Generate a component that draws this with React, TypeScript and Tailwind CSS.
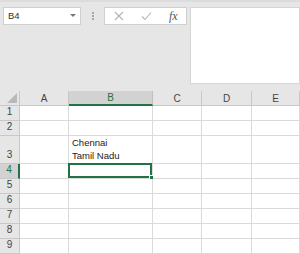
import React from "react";

const cols = ["A", "B", "C", "D", "E"];
const rows = [1, 2, 3, 4, 5, 6, 7, 8, 9];

export default function App() {
  return (
    <div className="w-[300px] h-[254px] overflow-hidden bg-white text-[#444]" style={{ fontFamily: '"Liberation Sans", Arial, sans-serif' }}>
      {/* formula bar area */}
      <div className="h-[91px] bg-[#e6e6e6] flex items-start pt-[5px] pl-[3px] gap-[3px] border-t-[2px] border-[#dcdcdc]">
        <div className="w-[78px] h-[18px] bg-white border border-[#d0d0d0] flex items-center justify-between pl-[4px] pr-[4px] text-[9.5px] text-[#333]">
          <span>B4</span>
          <svg width="6" height="4" viewBox="0 0 6 4"><path d="M0 0h6L3 3z" fill="#777" /></svg>
        </div>
        <div className="w-[17px] h-[18px] flex items-center justify-center">
          <div className="flex flex-col gap-[1px]">
            <span className="w-[2px] h-[2px] bg-[#a8a8a8]" />
            <span className="w-[2px] h-[2px] bg-[#a8a8a8]" />
            <span className="w-[2px] h-[2px] bg-[#a8a8a8]" />
          </div>
        </div>
        <div className="w-[83px] h-[18px] bg-white border border-[#d0d0d0] flex items-center pl-[8px]">
          <svg width="10" height="10" viewBox="0 0 10 10" className="ml-[1px]"><path d="M1 1l8 8M9 1l-8 8" stroke="#b5b5b5" strokeWidth="1.1" /></svg>
          <svg width="11" height="10" viewBox="0 0 11 10" className="ml-[17px]"><path d="M1 5.5l3 3L10 1.5" stroke="#b5b5b5" strokeWidth="1.1" fill="none" /></svg>
          <span className="ml-[17px] italic text-[12px] text-[#555] leading-none" style={{ fontFamily: '"Liberation Serif", serif' }}>fx</span>
        </div>
        <div className="flex-1 h-[77px] bg-white border border-[#d6d6d6]" />
      </div>

      {/* grid */}
      <div className="grid grid-cols-[20px_49px_84px_49px_50px_48px] grid-rows-[15px_15px_15px_28px_15px_15px_15px_15px_15px_15px] text-[10px]">
        <div className="bg-[#e6e6e6] border-r border-b border-[#c8c8c8] flex items-end justify-end pr-[2px] pb-[2px]">
          <svg width="10" height="10" viewBox="0 0 10 10"><path d="M10 0v10H0z" fill="#b9b9b9" /></svg>
        </div>
        {cols.map((c) => (
          <div
            key={c}
            className={
              c === "B"
                ? "bg-[#d2d2d2] border-r border-[#c0c0c0] border-b-[2px] border-b-[#217346] flex items-center justify-center text-[#217346]"
                : "bg-[#e6e6e6] border-r border-b border-[#c8c8c8] flex items-center justify-center"
            }
          >
            {c}
          </div>
        ))}
        {rows.map((r) => (
          <React.Fragment key={r}>
            <div
              className={
                r === 4
                  ? "bg-[#d2d2d2] border-b border-[#c8c8c8] border-r-[2px] border-r-[#217346] flex items-end justify-center pb-[1px] text-[#217346]"
                  : "bg-[#e6e6e6] border-r border-b border-[#c8c8c8] flex items-end justify-center pb-[1px]"
              }
            >
              {r}
            </div>
            {cols.map((c) => (
              <div key={c} className="relative border-r border-b border-[#dadada] flex flex-col justify-end pl-[3px] pb-[1px] leading-[13px] text-[9.5px] text-[#222]">
                {r === 3 && c === "B" && (
                  <>
                    <span>Chennai</span>
                    <span>Tamil Nadu</span>
                  </>
                )}
                {r === 4 && c === "B" && (
                  <div className="absolute -left-[1px] -top-[1px] right-0 bottom-0 border-[2px] border-[#217346]">
                    <span className="absolute -right-[4px] -bottom-[4px] w-[5px] h-[5px] bg-[#217346] border border-white" />
                  </div>
                )}
              </div>
            ))}
          </React.Fragment>
        ))}
      </div>
    </div>
  );
}
